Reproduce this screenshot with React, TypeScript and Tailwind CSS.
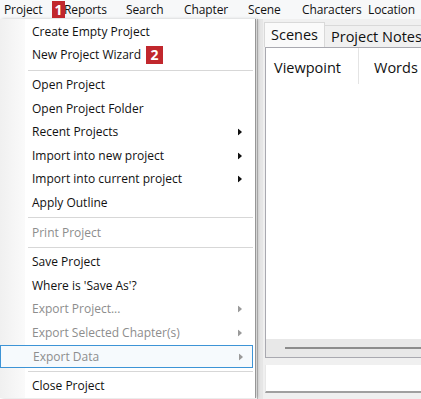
import React from "react";

const font = { fontFamily: '"Open Sans", "Noto Sans", sans-serif' };

type Item =
  | { kind: "item"; label: string; disabled?: boolean; sub?: boolean; hl?: boolean; badge?: string }
  | { kind: "sep" };

const items: Item[] = [
  { kind: "item", label: "Create Empty Project" },
  { kind: "item", label: "New Project Wizard", badge: "2" },
  { kind: "sep" },
  { kind: "item", label: "Open Project" },
  { kind: "item", label: "Open Project Folder" },
  { kind: "item", label: "Recent Projects", sub: true },
  { kind: "item", label: "Import into new project", sub: true },
  { kind: "item", label: "Import into current project", sub: true },
  { kind: "item", label: "Apply Outline" },
  { kind: "sep" },
  { kind: "item", label: "Print Project", disabled: true },
  { kind: "sep" },
  { kind: "item", label: "Save Project" },
  { kind: "item", label: "Where is 'Save As'?" },
  { kind: "item", label: "Export Project...", disabled: true, sub: true },
  { kind: "item", label: "Export Selected Chapter(s)", disabled: true, sub: true },
  { kind: "item", label: "Export Data", disabled: true, sub: true, hl: true },
  { kind: "sep" },
  { kind: "item", label: "Close Project" },
];

function Arrow({ disabled }: { disabled?: boolean }) {
  return (
    <svg width="4" height="7" viewBox="0 0 4 7" className="absolute left-[238px] top-1/2 -translate-y-1/2">
      <path d="M0 0 L4 3.5 L0 7 Z" fill={disabled ? "#9a9a9a" : "#111"} />
    </svg>
  );
}

export default function App() {
  const menuNames = [
    ["Project", "w-[60px]"],
    ["Reports", "w-[62px]"],
    ["Search", "w-[58px]"],
    ["Chapter", "w-[64px]"],
    ["Scene", "w-[54px]"],
    ["Characters", "w-[66px]"],
    ["Location", "w-[60px]"],
  ];
  return (
    <div className="relative w-[421px] h-[399px] overflow-hidden bg-[#f0f0f0] text-[#111]" style={font}>
      {/* menu bar */}
      <div className="h-[19px] flex items-center pl-[4px] bg-[#f7f8f9] text-[12px] tracking-[-0.1px] whitespace-nowrap">
        {menuNames.map(([n, w]) => (
          <div key={n} className={`${w} shrink-0 leading-[18px]`}>
            {n}
          </div>
        ))}
      </div>

      {/* app body */}
      <div className="flex h-[380px]">
        <div className="w-[257px] shrink-0 bg-white" />
        <div className="w-[6px] shrink-0 bg-[#e6e6e6] border-l border-[#bdbdbd]" />
        <div className="flex-1 flex flex-col bg-[#f0f0f0] pt-[3px]">
          {/* tabs */}
          <div className="flex items-end h-[25px] pl-[1px]">
            <div className="h-[25px] px-[6px] bg-[#fafafa] border border-b-0 border-[#d9d9d9] text-[14.5px] leading-[24px]">
              Scenes
            </div>
            <div className="h-[22px] pl-[6px] border-t border-[#d9d9d9] text-[14.5px] leading-[22px] whitespace-nowrap">
              Project Notes
            </div>
          </div>
          {/* frame */}
          <div className="ml-[2px] h-[311px] bg-[#fafafa] border-l border-t border-b border-[#a9a9b0] flex flex-col">
            <div className="flex h-[36px] items-center text-[14.5px] bg-white">
              <div className="w-[93px] h-full pl-[8px] pt-[3px] flex items-center border-r border-[#e4e4e4]">Viewpoint</div>
              <div className="pl-[15px] pt-[3px]">Words</div>
            </div>
            <div className="flex-1 bg-white" />
            <div className="h-[18px] bg-[#e8e8e8] flex items-center pl-[19px]">
              <div className="flex-1 h-[2px] bg-[#8c8c8c]" />
            </div>
          </div>
          <div className="mt-[7px] ml-[2px] h-[28px] bg-white border-b-2 border-[#a0a0a0] border-l border-l-[#e8e8e8]" />
        </div>
      </div>

      {/* dropdown menu */}
      <div className="absolute left-0 top-[19px] pt-[1px] w-[256px] bg-white border-r border-[#979797] text-[12px] shadow-[2px_0_3px_rgba(0,0,0,0.2)]">
        <div className="absolute left-0 top-0 bottom-0 w-[25px] bg-gradient-to-r from-[#f0f0f0] to-[#fafafa]" />
        {items.map((it, i) =>
          it.kind === "sep" ? (
            <div key={i} className="relative h-[6px] flex items-center pl-[28px] pr-[2px]">
              <div className="flex-1 h-px bg-[#d7d7d7]" />
            </div>
          ) : (
            <div
              key={i}
              className={`relative h-[23.6px] flex items-center pl-[32px] whitespace-nowrap ${
                it.hl ? "border border-[#3d94d6] bg-[#f6fafd] pl-[31px] mr-[2px]" : ""
              } ${it.disabled ? "text-[#8d8d8d]" : "text-[#111]"}`}
            >
              {it.label}
              {it.sub && <Arrow disabled={it.disabled} />}
            </div>
          )
        )}
      </div>

      {/* badges */}
      <div className="absolute left-[52px] top-[1px] w-[13px] h-[17px] bg-[#c1272d] text-white font-bold text-[14px] leading-[17px] text-center">
        1
      </div>
      <div className="absolute left-[146px] top-[46px] w-[17px] h-[18px] bg-[#c1272d] text-white font-bold text-[14px] leading-[18px] text-center">
        2
      </div>
    </div>
  );
}
